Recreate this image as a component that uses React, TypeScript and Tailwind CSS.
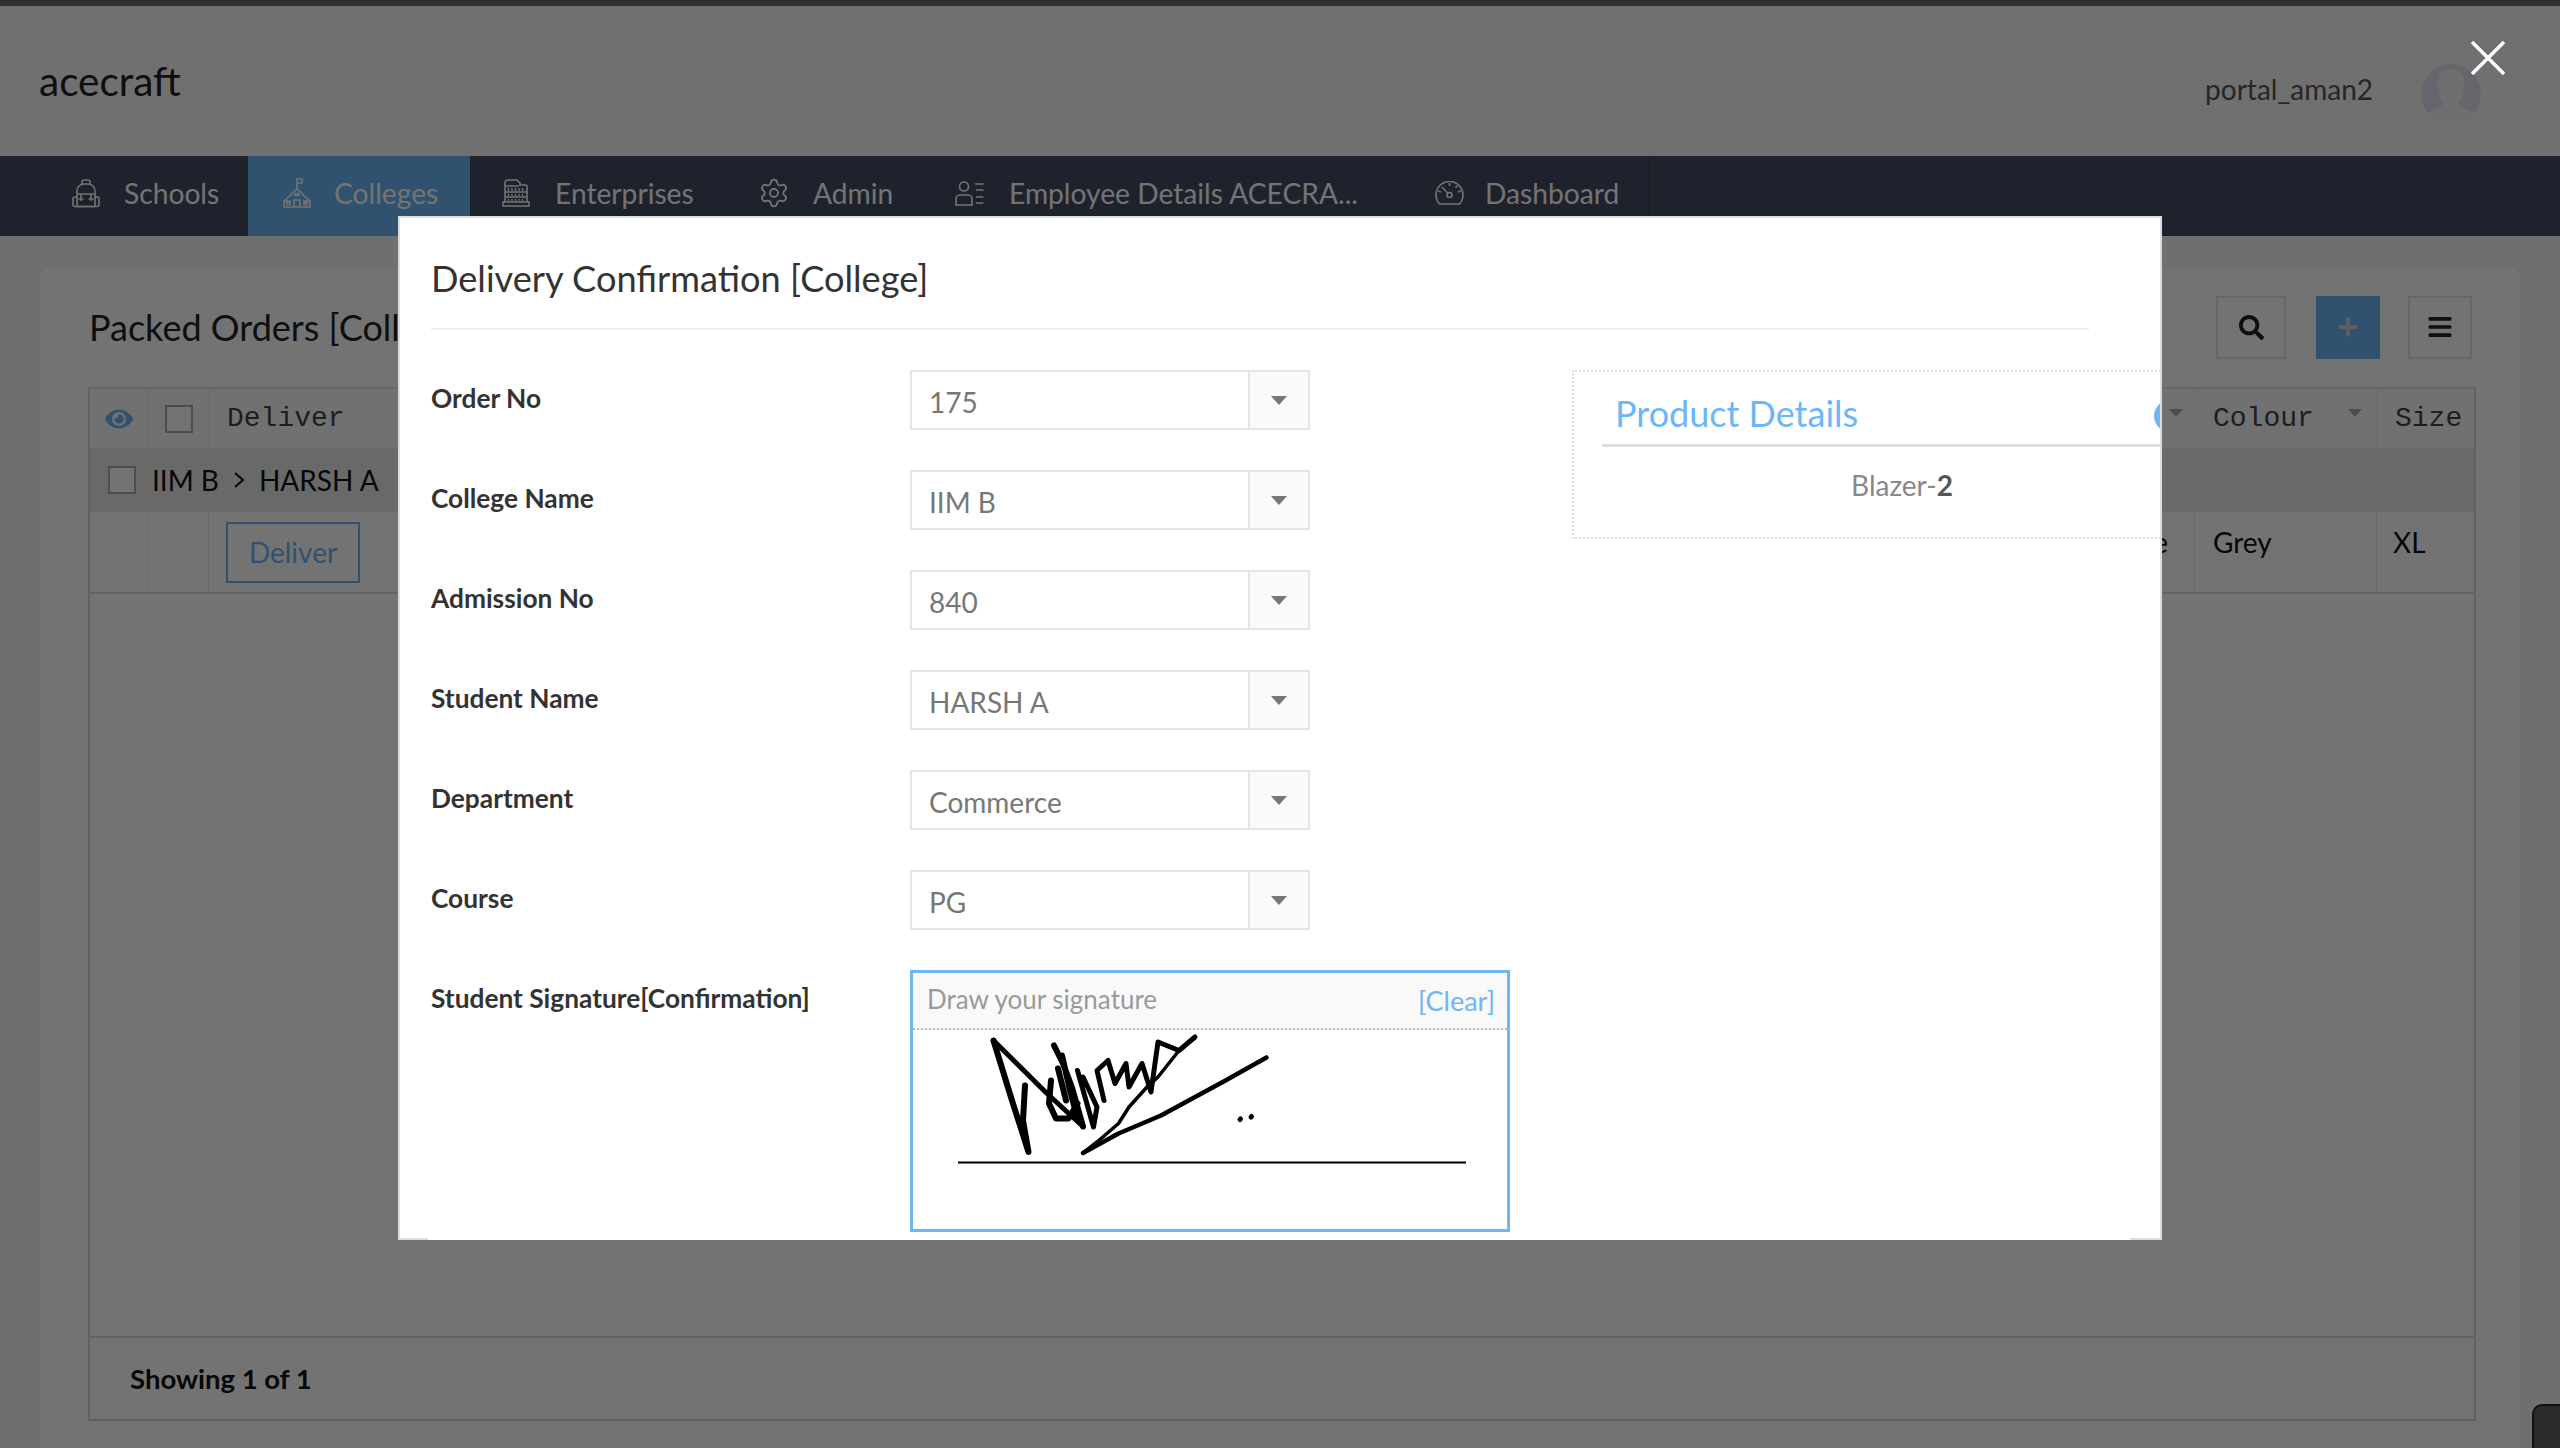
import { ReactNode } from "react";
import { Settings } from "lucide-react";
import { FaBars, FaEye, FaPlus, FaSearch } from "react-icons/fa";

const fields = [
  { label: "Order No", value: "175" },
  { label: "College Name", value: "IIM B" },
  { label: "Admission No", value: "840" },
  { label: "Student Name", value: "HARSH A" },
  { label: "Department", value: "Commerce" },
  { label: "Course", value: "PG" },
];

function Backpack() {
  return (
    <svg width="28" height="29" viewBox="0 0 28 29" fill="none" stroke="currentColor" strokeWidth="1.6" strokeLinejoin="round">
      <path d="M5 27.500V12a7 7 0 0 1 7-7h4a7 7 0 0 1 7 7v15.500z" />
      <path d="M10 5V3a2 2 0 0 1 2-2h4a2 2 0 0 1 2 2v2" />
      <path d="M5 15h18M9 15v7M19 15v7M6.500 20h5M16.500 20h5" />
      <path d="M5 18H3a2 2 0 0 0-2 2v5.500a2 2 0 0 0 2 2h22a2 2 0 0 0 2-2V20a2 2 0 0 0-2-2h-2" />
    </svg>
  );
}

function SchoolIcon() {
  return (
    <svg width="28" height="30" viewBox="0 0 28 30" fill="none" stroke="currentColor" strokeWidth="1.6">
      <path d="M14 12V1h5v4h-5" />
      <path d="M8 18v-2l6-5 6 5v2" />
      <path d="M8 17L1 23v6h26v-6l-7-6" />
      <path d="M1 23h7M20 23h7M11 29v-7h6v7M4 24h3v2.500H4zM21 24h3v2.500h-3zM12 15.500h4v2h-4z" />
    </svg>
  );
}

function Colosseum() {
  return (
    <svg width="28" height="28" viewBox="0 0 28 28" fill="none" stroke="currentColor" strokeWidth="1.6">
      <path d="M3 23V4a3 3 0 0 1 3-3h9l3 3v2h6a1 1 0 0 1 1 1v16" />
      <path d="M3 7h14M3 13h22M3 18h22M1 23h26v4H1z" />
      <path d="M6.500 9v3M10 9v3M13.500 9v3M17 9v3M20.500 9v3M6.500 15v2M10 15v2M13.500 15v2M17 15v2M20.500 15v2M6.500 20v2M10 20v2M13.500 20v2M17 20v2M20.500 20v2" strokeWidth="1.300" />
    </svg>
  );
}

function PersonList() {
  return (
    <svg width="29" height="25" viewBox="0 0 29 25" fill="none" stroke="currentColor" strokeWidth="1.600">
      <circle cx="9" cy="5.500" r="4.500" />
      <path d="M1 24v-6a4 4 0 0 1 4-4h8a4 4 0 0 1 4 4v6z" />
      <path d="M20 3h8.500M21 9h7.500M21 16h7.500M21 22h7.500" />
    </svg>
  );
}

function Gauge() {
  return (
    <svg width="29" height="24" viewBox="0 0 29 24" fill="none" stroke="currentColor" strokeWidth="1.600">
      <path d="M4.500 23a13.500 13.500 0 1 1 20 0z" />
      <circle cx="14.500" cy="14" r="2.500" />
      <path d="M12.500 12L7 6M14.500 2v3M3 10l3 1M26 10l-3 1M22.500 4.500l-2 2" />
    </svg>
  );
}

function NavItem({ icon, label, active, className }: { icon: ReactNode; label: string; active?: boolean; className: string }) {
  return (
    <div className={`flex h-full items-center whitespace-nowrap pb-[6px] text-[28.200px] text-white ${active ? "bg-[#6db6f7]" : ""} ${className}`}>
      {icon}
      <span>{label}</span>
    </div>
  );
}

function Caret({ className }: { className?: string }) {
  return <span className={`h-0 w-0 border-x-[7px] border-t-[8px] border-x-transparent border-t-[#aaa] ${className ?? ""}`} />;
}

function Signature() {
  return (
    <svg className="block h-full w-full" viewBox="0 0 594 198" fill="none" stroke="#000" strokeLinecap="round" strokeLinejoin="round">
      <g transform="translate(27 -10)">
        <path d="M53.500 20L72 80L88.500 131.500L83 100L85 65" strokeWidth="6" />
        <path d="M53.500 20L107 73L143 106" strokeWidth="5" />
        <path d="M114 25L123 43L132 67L143 106M111 60L109 83L116 98L128.500 98L137.500 83M122 35L130 70L138 100M118 48L126 80" strokeWidth="6" />
        <path d="M137.500 50L153.500 106.500L157 86.500L143 56.500M164 80L157 50L168 40L175 63L186 43L189 66.500L202 43L211 71.500L218 21.500L239 30L255 16.500" strokeWidth="5" />
        <path d="M239 30L218 56.500L207 66.500L189 86.500L178.500 103L157 121.500L143 132.500" strokeWidth="3.500" />
        <path d="M143 132.500L178.500 113L221 95L285.500 60L326.500 37" strokeWidth="4.500" />
        <path d="M300 99L300.500 98.500M311 96.500L311.500 96" strokeWidth="5" />
      </g>
      <path d="M45 132H553" strokeWidth="2" strokeLinecap="butt" />
    </svg>
  );
}

export default function App() {
  return (
    <div className="relative h-[1448px] w-[2560px] overflow-hidden bg-[#f5f5f5] font-['Lato',sans-serif] text-[#222]">
      {/* page behind the popup */}
      <div className="h-[6px] bg-[#6a6a6a]" />
      <header className="flex h-[150px] items-center justify-between bg-[#f9f9f9] pr-[78px] pl-[39px]">
        <span className="text-[40.500px] text-[#222]">acecraft</span>
        <div className="flex h-full items-center gap-[47px]">
          <span className="mt-[16px] text-[28px] text-[#555]">portal_aman2</span>
          <svg width="62" height="62" viewBox="0 0 62 62" className="mt-[26px]">
            <defs>
              <clipPath id="avatar-clip">
                <circle cx="31" cy="31" r="30" />
              </clipPath>
            </defs>
            <circle cx="31" cy="31" r="30" fill="#e3e5ef" />
            <g clipPath="url(#avatar-clip)" fill="#f6f6f6">
              <path d="M31 6c-9 0-13 7-13 15 0 8 2 14 5 18l-1 4c-3 3-10 3-14 8l0 11h46V51c-4-5-11-5-14-8l-1-4c3-4 5-10 5-18 0-8-4-15-13-15z" />
            </g>
          </svg>
        </div>
      </header>
      <nav className="flex h-[80px] bg-[#434c62]">
        <NavItem icon={<span className="mr-[24px]"><Backpack /></span>} label="Schools" className="w-[248px] pl-[72px]" />
        <NavItem active icon={<span className="mr-[23px]"><SchoolIcon /></span>} label="Colleges" className="w-[222px] pl-[35px]" />
        <NavItem icon={<span className="mr-[25px]"><Colosseum /></span>} label="Enterprises" className="w-[258px] pl-[32px]" />
        <NavItem icon={<span className="mr-[23px]"><Settings size={32} strokeWidth={1.4} /></span>} label="Admin" className="w-[199px] pl-[30px]" />
        <NavItem icon={<span className="mr-[25px]"><PersonList /></span>} label="Employee Details ACECRA..." className="w-[474px] pl-[28px]" />
        <NavItem icon={<span className="mr-[21px]"><Gauge /></span>} label="Dashboard" className="w-[249px] border-r-2 border-[#3c4558] pl-[34px]" />
      </nav>
      <main className="mx-[38px] mt-[30px] h-[1190px] rounded-[12px] border border-[#eee] bg-white pr-[45px] pl-[49px]">
        <div className="flex h-[120px] items-center justify-between pr-[4px] pl-[1px]">
          <h1 className="text-[36px] text-[#222]">Packed Orders [College]</h1>
          <div className="flex items-center">
            <span className="flex h-[63px] w-[70px] items-center justify-center border-2 border-[#e5e5e5] text-[#222]"><FaSearch size={25} /></span>
            <span className="ml-[30px] flex h-[63px] w-[64px] items-center justify-center bg-[#6db6f7] text-[#cfcfcf]"><FaPlus size={22} /></span>
            <span className="ml-[28px] flex h-[63px] w-[64px] items-center justify-center border-2 border-[#e5e5e5] text-[#222]"><FaBars size={26} /></span>
          </div>
        </div>
        <div className="flex h-[1034px] flex-col border-2 border-[#d8d8d8] border-t-[#dfe3ef]">
          <div className="flex h-[59px] shrink-0 items-center bg-[#fbfbfb] font-['Liberation_Mono',monospace] text-[28px] text-[#444]">
            <div className="flex h-full w-[59px] items-center justify-center border-r border-[#eee] text-[#6db6f7]"><FaEye size={28} /></div>
            <div className="flex h-full w-[60px] items-center justify-center border-r border-[#eee]"><span className="h-[28px] w-[28px] border-2 border-[#aaa] bg-white" /></div>
            <div className="flex flex-1 items-center pl-[18px]">Deliver</div>
            <div className="relative flex h-full w-[182px] items-center border-l border-[#eee] pl-[18px]">
              <Caret className="absolute top-[20px] -left-[26px]" />
              Colour
              <Caret className="absolute top-[20px] right-[14px]" />
            </div>
            <div className="flex h-full w-[98px] items-center border-l border-[#eee] pl-[18px]">Size</div>
          </div>
          <div className="flex h-[64px] shrink-0 items-center bg-[#e8e8e8] pl-[18px] text-[28px] text-[#111]">
            <span className="mr-[16px] h-[28px] w-[28px] border-2 border-[#aaa] bg-white" />
            <span>IIM B</span>
            <svg width="14" height="20" viewBox="0 0 14 20" fill="none" stroke="currentColor" strokeWidth="2" className="mx-[13px]">
              <path d="M3 3l8 7-8 7" />
            </svg>
            <span>HARSH A</span>
          </div>
          <div className="flex h-[82px] shrink-0 items-center border-b-2 border-[#e0e0e0] text-[28px] text-[#111]">
            <div className="h-full w-[59px] border-r border-[#eee]" />
            <div className="h-full w-[60px] border-r border-[#eee]" />
            <div className="flex flex-1 items-center pl-[17px]">
              <span className="flex h-[61px] w-[134px] items-center justify-center border-2 border-[#6db6f7] text-[#6db6f7]">Deliver</span>
            </div>
            <div className="flex h-full w-[52px] items-center justify-end pr-[26px] pb-[20px]">e</div>
            <div className="flex h-full w-[182px] items-center border-l border-[#eee] pb-[20px] pl-[18px]">Grey</div>
            <div className="flex h-full w-[98px] items-center border-l border-[#eee] pb-[20px] pl-[16px]">XL</div>
          </div>
          <div className="flex-1" />
          <div className="flex h-[83px] shrink-0 items-center border-t-2 border-[#dcdcdc] pl-[40px] text-[27.500px] font-bold text-[#111]">Showing 1 of 1</div>
        </div>
      </main>

      {/* popup overlay */}
      <div className="absolute inset-0 bg-black/55" />

      <svg className="absolute top-[41px] left-[2471px]" width="34" height="34" viewBox="0 0 34 34" stroke="#fff" strokeWidth="3.500">
        <path d="M1 1L33 33M33 1L1 33" />
      </svg>
      <div className="absolute top-[1404px] left-[2532px] h-[44px] w-[28px] rounded-tl-[10px] border-t-2 border-l-2 border-[#111] bg-[#2b2b2b]" />

      <section className="absolute top-[216px] left-[398px] h-[1024px] w-[1764px] border-2 border-[#ddd] bg-white">
        <div className="h-full overflow-hidden pl-[31px]">
          <div className="flex h-[112px] w-[1658px] items-center border-b-2 border-[#eee] text-[36.200px] leading-none text-[#333]">
            <span className="mt-[11px]">Delivery Confirmation [College]</span>
          </div>
          <div className="mt-[40px] flex">
            <div className="w-[1141px] shrink-0">
              {fields.map((f) => (
                <div key={f.label} className="mb-[40px] flex h-[60px] items-center">
                  <label className="-mt-[2px] w-[479px] text-[26.300px] font-bold text-[#333]">{f.label}</label>
                  <div className="flex h-[60px] w-[400px] border-2 border-[#e5e5e5]">
                    <span className="flex flex-1 items-center pt-[4px] pl-[17px] text-[28px] text-[#777]">{f.value}</span>
                    <span className="flex w-[60px] items-center justify-center border-l-2 border-[#e5e5e5] bg-[#fafafa]">
                      <span className="h-0 w-0 border-x-[8px] border-t-[9px] border-x-transparent border-t-[#777]" />
                    </span>
                  </div>
                </div>
              ))}
              <div className="flex">
                <label className="mt-[9px] w-[479px] text-[26.300px] font-bold text-[#333]">Student Signature[Confirmation]</label>
                <div className="flex h-[262px] w-[600px] flex-col border-[3px] border-[#6db6f7]">
                  <div className="flex h-[57px] shrink-0 items-center justify-between border-b-2 border-dotted border-[#bbb] bg-[#f9f9f9] pr-[12px] pl-[14px]">
                    <span className="-mt-[2px] text-[26px] text-[#999]">Draw your signature</span>
                    <span className="mt-[2px] text-[27px] text-[#6db6f7]">[Clear]</span>
                  </div>
                  <div className="min-h-0 flex-1"><Signature /></div>
                </div>
              </div>
            </div>
            <div className="relative h-[169px] w-[660px] shrink-0 border-2 border-dotted border-[#ddd] px-[28px]">
              <div className="flex h-[75px] items-center border-b-[3px] border-[#ddd] pt-[10px] pl-[13px] text-[36px] text-[#6db6f7]">Product Details</div>
              <div className="mt-[17px] text-center text-[28px] text-[#888]">Blazer-<b className="text-[#555]">2</b></div>
              <span className="absolute top-[28px] left-[580px] h-[32px] w-[32px] rounded-full bg-[#6db6f7]" />
            </div>
          </div>
        </div>
        <div className="absolute -bottom-[2px] left-[28px] h-[2px] w-[1702px] bg-white" />
      </section>
    </div>
  );
}
